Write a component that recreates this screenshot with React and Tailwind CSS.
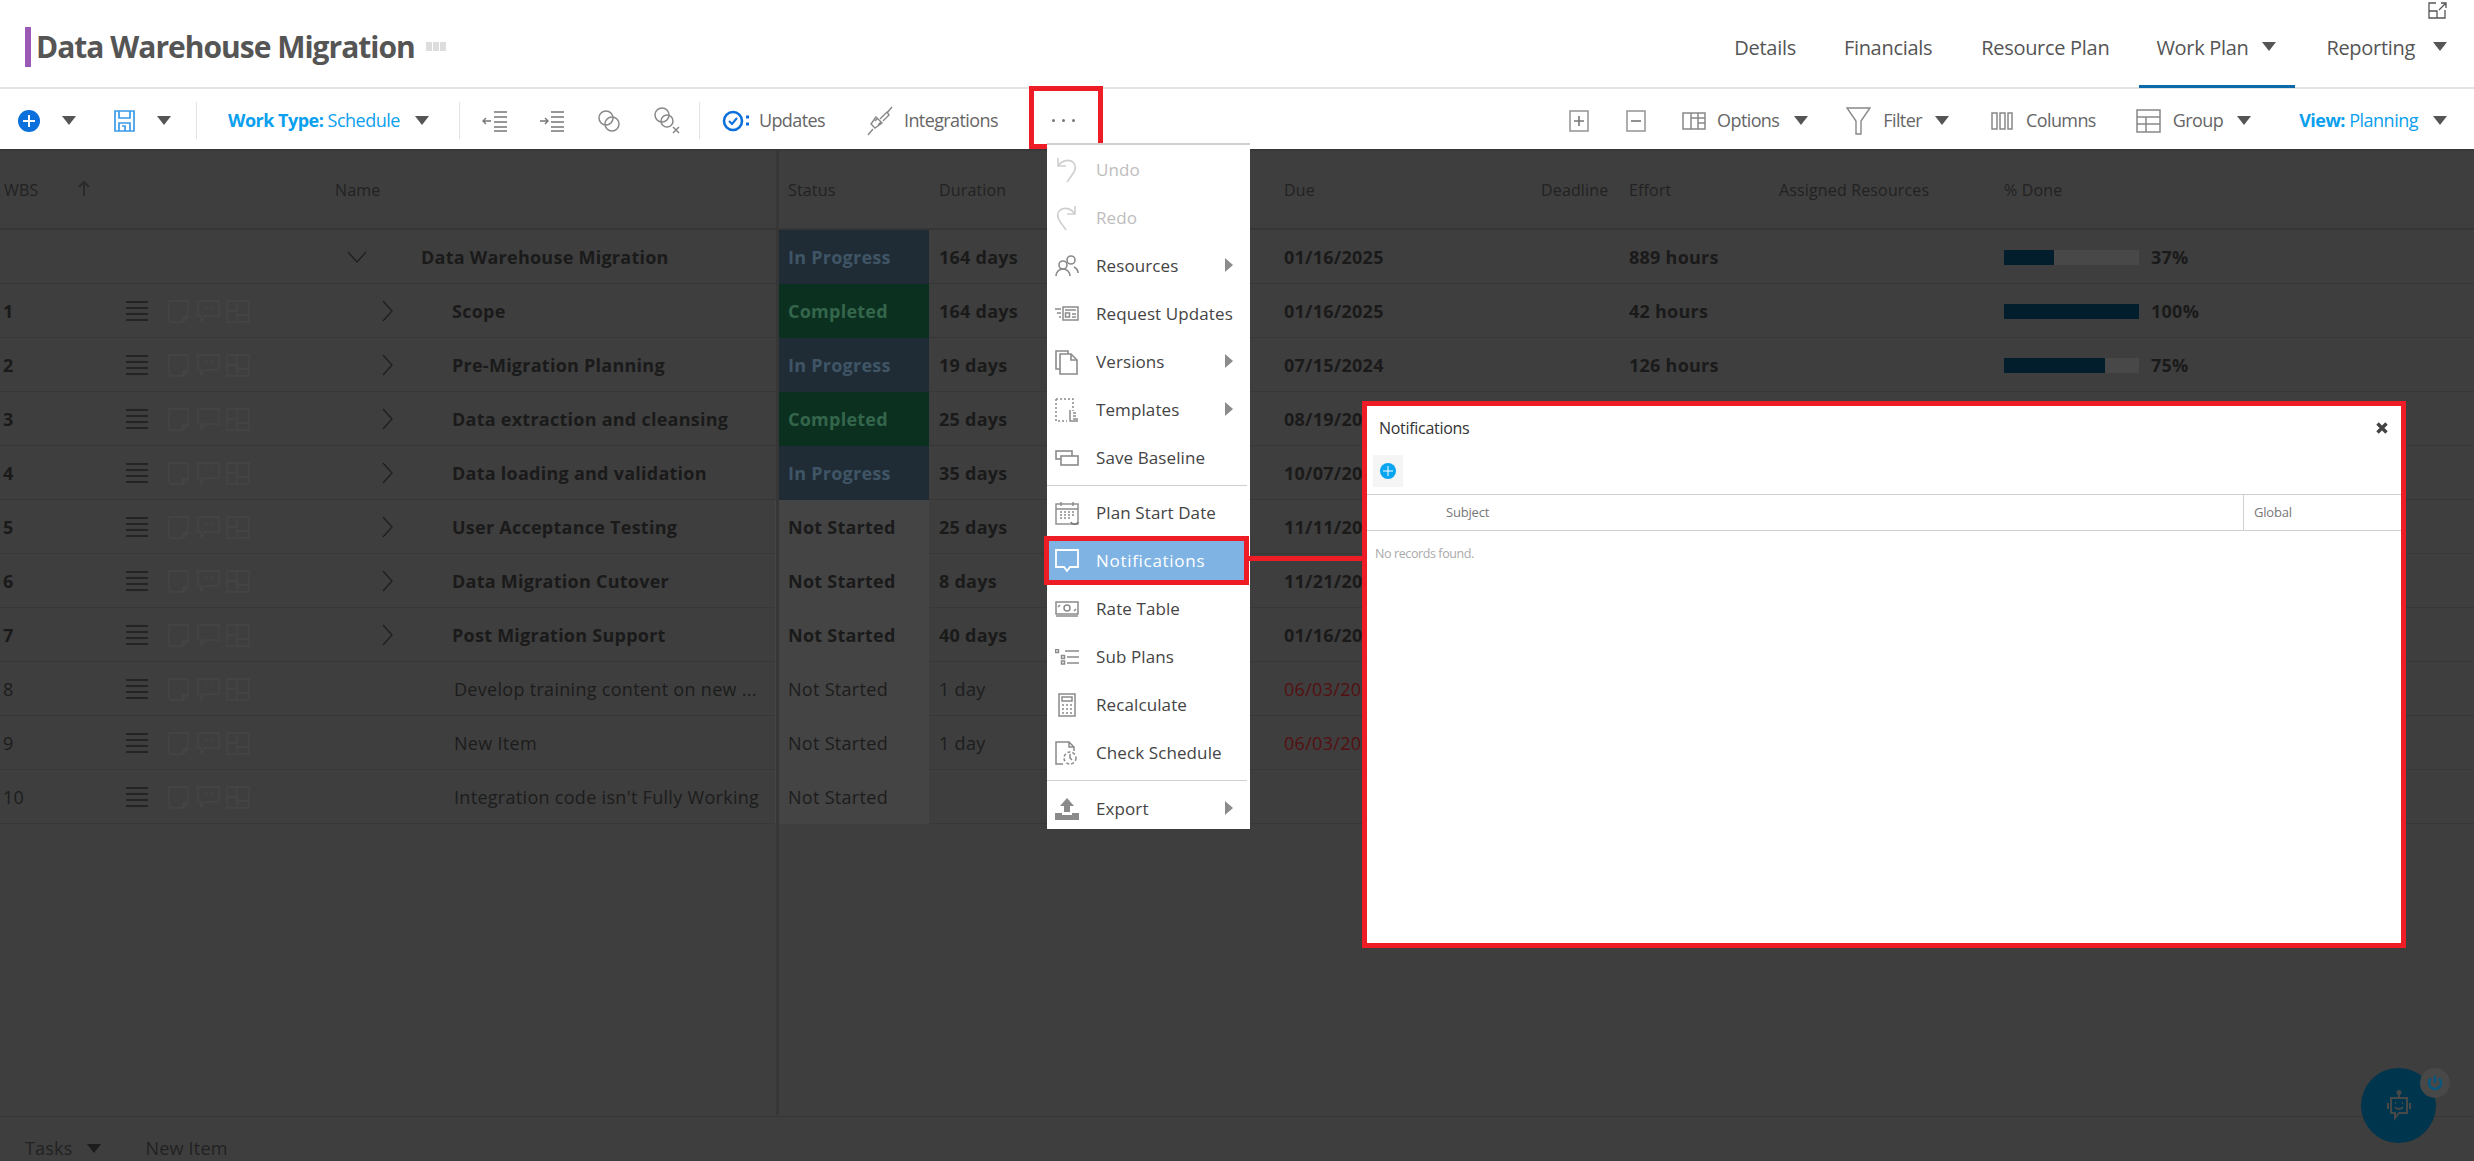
import React from "react";

const Caret = ({ c = "border-t-[#555]", cls = "" }) => (
  <span className={`inline-block w-0 h-0 border-l-[7px] border-r-[7px] border-t-[9px] border-l-transparent border-r-transparent ${c} ${cls}`} />
);

const S = ({ w, h, children, cls = "", stroke = "#8a8a8a", sw = 1.5, vb }) => (
  <svg width={w} height={h} viewBox={vb || `0 0 ${w} ${h}`} fill="none" stroke={stroke} strokeWidth={sw} className={`shrink-0 ${cls}`}>{children}</svg>
);

const icons = {
  undo: <S w={24} h={28} stroke="#cfcfcf" sw={1.6}><path d="M3 2v8h8M3 10c4-6 11-7 15-4 4 4 2 9-1 13l-5 7" /></S>,
  redo: <S w={24} h={28} stroke="#cfcfcf" sw={1.6}><path d="M20 2v8h-8M20 10c-4-6-11-7-15-4-4 4-2 9 1 13l5 7" /></S>,
  res: <S w={24} h={24} sw={1.6}><circle cx="16" cy="6" r="4" /><circle cx="8" cy="11" r="4" /><path d="M19 13c2 1 4 3 4 6M1 22c0-4 3-7 7-7s7 3 7 7" /></S>,
  req: <S w={24} h={16} sw={1.5}><rect x="8" y="1" width="15" height="13" /><path d="M10 4h11M0 3h6M2 7h4M4 11h2" /><rect x="10.5" y="7" width="4" height="4" /><path d="M17 8h4M17 11h4" /></S>,
  ver: <S w={24} h={26} sw={1.6}><path d="M5 20H1V2h12v3" /><path d="M5 5h11l6 6v14H5z" /><path d="M16 5v6h6" /></S>,
  tpl: <S w={24} h={25} sw={1.5}><path d="M1 1h17v12M1 1v22h11" strokeDasharray="2 2" /><path d="M15 12v11h8M18 15h3M18 18h3M18 21h5" /></S>,
  base: <S w={24} h={16} sw={1.6}><rect x="1" y="1" width="16" height="8" /><rect x="6" y="6" width="17" height="9" fill="#fff" /></S>,
  cal: <S w={24} h={25} sw={1.4}><rect x="1" y="3" width="22" height="20" /><path d="M1 8h22M6 1v4M18 1v4" /><path d="M5 11h2M9 11h2M13 11h2M17 11h2M5 14h2M9 14h2M13 14h2M17 14h2M5 17h2M9 17h2M13 17h2" /><path d="M16 21c1 3 6 3 7 0" stroke="#777" /></S>,
  note: <S w={24} h={24} stroke="#fff" sw={1.8}><path d="M1 1h22v17h-8l-3 4-3-4H1z" /></S>,
  rate: <S w={24} h={17} sw={1.5}><rect x="1" y="1" width="22" height="12" /><circle cx="12" cy="7" r="3" /><path d="M5 4l-2 2M19 10l2-2M1 15h22" /></S>,
  sub: <S w={24} h={16} sw={1.5}><rect x="0.5" y="0.5" width="3" height="3" /><rect x="6.5" y="6.5" width="3" height="3" /><rect x="6.5" y="12" width="3" height="3" /><path d="M10 2h14M12 8h12M12 14h12" /></S>,
  calc: <S w={24} h={24} sw={1.5}><rect x="4" y="1" width="16" height="22" /><rect x="7" y="4" width="10" height="4" /><path d="M7 12h2M11 12h2M15 12h2M7 16h2M11 16h2M15 16h2M7 20h2M11 20h2M15 20h2" /></S>,
  check: <S w={24} h={24} sw={1.5}><path d="M8 23H1V1h13l5 5v4M14 1v5h5" /><circle cx="15" cy="17" r="6" strokeDasharray="3 2" /><path d="M15 13v4l2 2" /></S>,
  exp: <svg width="24" height="22" viewBox="0 0 24 22" fill="#8a8a8a" className="shrink-0"><path d="M12 0l7 8h-4v6H9V8H5zM0 15h7v2h10v-2h7v7H0z" /></svg>,
};

const MenuItem = ({ icon, label, arrow, disabled, active }) => (
  <div className="relative flex items-center h-[48px] pl-[8px]">
    {active && <span className="absolute left-[2px] right-[6px] top-[4px] bottom-[5px] bg-[#7eb3e4]" />}
    <span className="relative w-[24px] h-[28px] flex items-center justify-center">{icons[icon]}</span>
    <span className={`relative ml-[17px] text-[17px] ${active ? "tracking-[0.7px] text-white" : disabled ? "tracking-[0.1px] text-[#bdbdbd]" : "tracking-[0.1px] text-[#444]"}`}>{label}</span>
    {arrow && <span className="absolute left-[178px] top-[16px] w-0 h-0 border-t-[7px] border-b-[7px] border-l-[8px] border-t-transparent border-b-transparent border-l-[#8c8c8c]" />}
    {active && <span className="absolute left-[-3px] top-[-1px] w-[205px] h-[49px] border-[5px] border-[#ee1c25]" />}
  </div>
);

const RowIcons = () => (
  <div className="flex items-center">
    <svg width="22" height="20" stroke="#1d1d1d" strokeWidth="1.6" className="shrink-0"><path d="M0 1h22M0 7h22M0 13h22M0 19h22" /></svg>
    <svg width="82" height="23" fill="none" stroke="#464646" strokeWidth="1.3" className="ml-[20px] shrink-0">
      <path d="M1 1h19v16l-5 5H3l-2-2zM15 22v-5h5" />
      <path d="M30 1h21v15H37l-4 5v-5h-3z" /><path d="M38 6v3M43 6v3" />
      <path d="M59 1h22v21H59zM59 11h10M69 1v21M69 15h12" />
    </svg>
  </div>
);

const Chevron = () => (
  <svg width="11" height="22" fill="none" stroke="#1d1d1d" strokeWidth="1.2"><path d="M1 1l9 10-9 10" /></svg>
);

const rows = [
  { w: "", n: "Data Warehouse Migration", st: "p", d: "164 days", due: "01/16/2025", e: "889 hours", pc: 37, root: 1, b: 1 },
  { w: "1", n: "Scope", st: "c", d: "164 days", due: "01/16/2025", e: "42 hours", pc: 100, b: 1 },
  { w: "2", n: "Pre-Migration Planning", st: "p", d: "19 days", due: "07/15/2024", e: "126 hours", pc: 75, b: 1 },
  { w: "3", n: "Data extraction and cleansing", st: "c", d: "25 days", due: "08/19/2024", b: 1 },
  { w: "4", n: "Data loading and validation", st: "p", d: "35 days", due: "10/07/2024", b: 1 },
  { w: "5", n: "User Acceptance Testing", st: "n", d: "25 days", due: "11/11/2024", b: 1 },
  { w: "6", n: "Data Migration Cutover", st: "n", d: "8 days", due: "11/21/2024", b: 1 },
  { w: "7", n: "Post Migration Support", st: "n", d: "40 days", due: "01/16/2025", b: 1 },
  { w: "8", n: "Develop training content on new ...", st: "n", d: "1 day", due: "06/03/2024", late: 1 },
  { w: "9", n: "New Item", st: "n", d: "1 day", due: "06/03/2024", late: 1 },
  { w: "10", n: "Integration code isn't Fully Working", st: "n" },
];

const stCls = {
  p: "ml-[3px] pl-[10px] bg-[#1f2c35] text-[#3f5566]",
  c: "ml-[3px] pl-[10px] bg-[#0b3020] text-[#34664b]",
  n: "pl-[13px] bg-[#444444] text-inherit",
};
const stTxt = { p: "In Progress", c: "Completed", n: "Not Started" };
const cols = "grid grid-cols-[126px_256px_70px_323px_154px_345px_257px_88px_150px_225px_1fr]";

const Row = ({ r }) => (
  <div className={`${cols} h-[54px] border-b border-[#373737] items-center text-[18px] ${r.b ? "font-bold tracking-[0.25px] text-[#1a1a1a]" : "tracking-[0.3px] text-[#1c1c1c]"}`}>
    <div className="pl-[3px]">{r.w}</div>
    <div>{!r.root && <RowIcons />}</div>
    <div>{r.root ? <svg width="20" height="12" fill="none" stroke="#1d1d1d" strokeWidth="1.2" className="-ml-[35px]"><path d="M1 1l9 10 9-10" /></svg> : r.b ? <Chevron /> : null}</div>
    <div className={`whitespace-nowrap ${r.root ? "-ml-[31px]" : r.b ? "" : "pl-[2px]"}`}>{r.n}</div>
    <div className={`h-[54px] flex items-center ${stCls[r.st]}`}><span>{stTxt[r.st]}</span></div>
    <div className="pl-[10px]">{r.d}</div>
    <div className={`pl-[10px] ${r.late ? "text-[#541010]" : ""}`}>{r.due}</div>
    <div />
    <div className="pl-[10px]">{r.e}</div>
    <div />
    <div className="pl-[10px] flex items-center">
      {r.pc != null && (
        <>
          <div className="w-[135px] h-[15px] bg-[#484848]">
            <div className="h-full bg-[#021d2b]" style={{ width: `${r.pc}%` }} />
          </div>
          <span className="ml-[12px]">{r.pc}%</span>
        </>
      )}
    </div>
  </div>
);

export default function App() {
  return (
    <div className="relative w-[2474px] h-[1161px] overflow-hidden bg-white font-['Open_Sans',sans-serif] flex flex-col">
      {/* header */}
      <header className="relative h-[89px] shrink-0 border-b-2 border-[#e3e3e3] flex items-center">
        <span className="ml-[25px] w-[6px] h-[40px] mt-[6px] bg-[#9b59b6]" />
        <h1 className="ml-[5px] mt-[6px] text-[30px] font-bold text-[#555] tracking-[-1px] whitespace-nowrap">Data Warehouse Migration</h1>
        <span className="ml-[11px] mt-[6px] flex gap-[1px]">
          <i className="w-[6px] h-[9px] bg-[#ddd]" /><i className="w-[6px] h-[9px] bg-[#ddd]" /><i className="w-[6px] h-[9px] bg-[#ddd]" />
        </span>
        <nav className="ml-auto mr-[27px] flex items-center h-full text-[20px] text-[#555] tracking-[-0.3px]">
          <span className="mr-[48px] mt-[8px]">Details</span>
          <span className="mr-[49px] mt-[8px]">Financials</span>
          <span className="mr-[30px] mt-[8px]">Resource Plan</span>
          <span className="relative h-full pl-[17px] flex items-center w-[156px] shrink-0">
            <span className="mt-[8px] whitespace-nowrap">Work Plan</span><Caret cls="ml-[13px] mt-[6px]" />
            <span className="absolute left-0 right-0 bottom-[-1px] h-[3px] bg-[#0a69a8]" />
          </span>
          <span className="ml-[31px] mt-[8px]">Reporting</span><Caret cls="ml-[18px] mt-[6px]" />
        </nav>
        <svg width="19" height="17" fill="none" stroke="#555" strokeWidth="1.3" className="absolute left-[2428px] top-[2px]">
          <path d="M8 1H1v15h16V8M1 9h8v7M11 8l7-7M13 1h5v5" />
        </svg>
      </header>

      {/* toolbar */}
      <div className="h-[60px] shrink-0 flex items-center text-[18px] text-[#666] tracking-[-0.6px] pt-[3px]">
        <svg width="22" height="22" className="ml-[18px] shrink-0"><circle cx="11" cy="11" r="11" fill="#0b6fdc" /><path d="M11 5v12M5 11h12" stroke="#fff" strokeWidth="2" /></svg>
        <Caret cls="ml-[22px]" />
        <svg width="21" height="22" fill="none" stroke="#3b9be8" strokeWidth="1.7" className="ml-[38px] shrink-0"><path d="M1 1h19v20H1zM5 1v7h11V1M5 21v-8h11v8M8 16h3v5" /></svg>
        <Caret cls="ml-[22px]" />
        <span className="ml-[25px] w-[1px] h-[37px] bg-[#e3e3e3]" />
        <span className="ml-[31px] text-[#0aa0ee] whitespace-nowrap tracking-[-0.5px]"><b>Work Type:</b> Schedule</span>
        <Caret cls="ml-[15px]" />
        <span className="ml-[30px] w-[1px] h-[37px] bg-[#e3e3e3]" />
        <svg width="26" height="22" fill="none" stroke="#777" strokeWidth="1.4" className="ml-[22px] shrink-0"><path d="M12 2h13M12 7h13M12 12h13M12 17h13M12 21h13M9 11H1M4 8l-3 3 3 3" /></svg>
        <svg width="26" height="22" fill="none" stroke="#777" strokeWidth="1.4" className="ml-[31px] shrink-0"><path d="M12 2h13M12 7h13M12 12h13M12 17h13M12 21h13M1 11h8M6 8l3 3-3 3" /></svg>
        <svg width="24" height="24" fill="none" stroke="#888" strokeWidth="1.5" className="ml-[32px] shrink-0"><circle cx="9" cy="9" r="7" /><circle cx="15" cy="15" r="7" /></svg>
        <svg width="26" height="27" fill="none" stroke="#888" strokeWidth="1.5" className="ml-[33px] shrink-0"><circle cx="8" cy="8" r="7" /><circle cx="13" cy="14" r="6" /><path d="M19 20l6 6M25 20l-6 6" /></svg>
        <span className="ml-[19px] w-[1px] h-[37px] bg-[#e3e3e3]" />
        <svg width="27" height="24" fill="none" stroke="#0b6fdc" strokeWidth="2.6" className="ml-[22px] shrink-0"><circle cx="11" cy="12" r="9" /><path d="M7 12l3 3 5-6" strokeWidth="2" /><path d="M24 8h3M24 15h3" strokeWidth="3" /></svg>
        <span className="ml-[10px]">Updates</span>
        <svg width="26" height="30" fill="none" stroke="#888" strokeWidth="1.4" className="ml-[42px] shrink-0"><path d="M1 29l5-6M25 1l-5 6M9 11l-5 7 4 4 7-5zM13 13l7-7 2 3-6 6M8 15l3-3M11 19l3-3" /></svg>
        <span className="ml-[11px]">Integrations</span>
        <span className="ml-[54px] flex gap-[7px] shrink-0"><i className="w-[3px] h-[3px] rounded-full bg-[#777]" /><i className="w-[3px] h-[3px] rounded-full bg-[#777]" /><i className="w-[3px] h-[3px] rounded-full bg-[#777]" /></span>

        <div className="ml-auto mr-[27px] flex items-center">
          <svg width="20" height="22" fill="none" stroke="#999" strokeWidth="1.6" className="shrink-0"><rect x="1" y="1" width="18" height="20" /><path d="M10 6v10M5 11h10" stroke="#777" /></svg>
          <svg width="20" height="22" fill="none" stroke="#999" strokeWidth="1.6" className="ml-[37px] shrink-0"><rect x="1" y="1" width="18" height="20" /><path d="M5 11h10" stroke="#777" /></svg>
          <svg width="24" height="18" fill="none" stroke="#888" strokeWidth="1.5" className="ml-[36px] shrink-0"><path d="M1 1h22v16H1zM9 1v16M16 1v16M9 6h14M16 11h7" /></svg>
          <span className="ml-[11px]">Options</span><Caret cls="ml-[15px]" />
          <svg width="25" height="28" fill="none" stroke="#888" strokeWidth="1.4" className="ml-[38px] shrink-0"><path d="M1 1h23l-9 13v13h-5V14z" /></svg>
          <span className="ml-[12px]">Filter</span><Caret cls="ml-[13px]" />
          <svg width="22" height="18" fill="none" stroke="#888" strokeWidth="1.5" className="ml-[42px] shrink-0"><path d="M1 1h5v16H1zM9 1h5v16H9zM17 1h4v16h-4z" /></svg>
          <span className="ml-[13px]">Columns</span>
          <svg width="25" height="24" fill="none" stroke="#888" strokeWidth="1.5" className="ml-[40px] shrink-0"><path d="M1 1h23v22H1zM1 8h23M1 15h23M10 8v15" /></svg>
          <span className="ml-[12px]">Group</span><Caret cls="ml-[14px]" />
          <span className="ml-[48px] text-[#0aa0ee] whitespace-nowrap tracking-[-0.5px]"><b>View:</b> Planning</span><Caret cls="ml-[15px]" />
        </div>
      </div>

      {/* dimmed worklist */}
      <main className="relative flex-1 bg-[#3e3e3e] border-t-[2px] border-[#383838] flex flex-col text-[#222]">
        <div className={`${cols} h-[79px] border-b-[2px] border-[#363636] items-center text-[16px] tracking-[0.15px] text-[#222]`}>
          <div className="pl-[4px] flex items-center">WBS
            <svg width="14" height="16" fill="none" stroke="#2a2a2a" strokeWidth="2" className="ml-[39px] mt-[-4px]"><path d="M7 16V2M2 7l5-5 5 5" /></svg>
          </div>
          <div className="pl-[209px]">Name</div>
          <div /><div />
          <div className="pl-[13px]">Status</div>
          <div className="pl-[10px]">Duration</div>
          <div className="pl-[10px]">Due</div>
          <div className="pl-[10px]">Deadline</div>
          <div className="pl-[10px]">Effort</div>
          <div className="pl-[10px]">Assigned Resources</div>
          <div className="pl-[10px]">% Done</div>
        </div>
        {rows.map((r, i) => <Row key={i} r={r} />)}
        <div className="flex-1" />
        <div className="h-[45px] shrink-0 border-t border-[#373737] flex items-center text-[18px] tracking-[0.2px] text-[#222] pt-[18px]">
          <span className="ml-[25px]">Tasks</span>
          <Caret c="border-t-[#1c1c1c]" cls="ml-[14px]" />
          <span className="ml-[45px]">New Item</span>
        </div>
        {/* left pane divider */}
        <span className="absolute left-[776px] top-0 bottom-[46px] w-[3px] bg-[#373737]" />
      </main>

      {/* red box on the more button */}
      <span className="absolute left-[1029px] top-[86px] w-[74px] h-[63px] border-[5px] border-[#ee1c25]" />

      {/* menu */}
      <div className="absolute left-[1047px] top-[143px] w-[203px] h-[686px] bg-white border-t-2 border-[#cfcfcf] pt-[1px]">
        <MenuItem icon="undo" label="Undo" disabled />
        <MenuItem icon="redo" label="Redo" disabled />
        <MenuItem icon="res" label="Resources" arrow />
        <MenuItem icon="req" label="Request Updates" />
        <MenuItem icon="ver" label="Versions" arrow />
        <MenuItem icon="tpl" label="Templates" arrow />
        <MenuItem icon="base" label="Save Baseline" />
        <div className="h-[1px] bg-[#cfcfcf] my-[3px] mr-[3px]" />
        <MenuItem icon="cal" label="Plan Start Date" />
        <MenuItem icon="note" label="Notifications" active />
        <MenuItem icon="rate" label="Rate Table" />
        <MenuItem icon="sub" label="Sub Plans" />
        <MenuItem icon="calc" label="Recalculate" />
        <MenuItem icon="check" label="Check Schedule" />
        <div className="h-[1px] bg-[#cfcfcf] mt-[3px] mb-[4px] mr-[3px]" />
        <MenuItem icon="exp" label="Export" arrow />
      </div>

      {/* connector */}
      <span className="absolute left-[1249px] top-[556px] w-[113px] h-[5px] bg-[#ee1c25]" />

      {/* modal */}
      <div className="absolute left-[1362px] top-[401px] w-[1044px] h-[547px] bg-white border-[5px] border-[#ee1c25] flex flex-col">
        <div className="h-[44px] shrink-0 flex items-center pl-[12px] pr-[13px] text-[16px] text-[#333] tracking-[-0.3px]">
          Notifications
          <svg width="12" height="12" stroke="#444" strokeWidth="3.4" className="ml-auto"><path d="M1.5 1.5l9 9M10.5 1.5l-9 9" /></svg>
        </div>
        <div className="h-[44px] shrink-0 pl-[6px] pt-[5px]">
          <div className="w-[30px] h-[32px] bg-[#f5f5f5] flex items-center justify-center">
            <svg width="16" height="16"><circle cx="8" cy="8" r="8" fill="#0aa5f0" /><path d="M8 3v10M3 8h10" stroke="#fff" strokeWidth="1" /></svg>
          </div>
        </div>
        <div className="h-[37px] shrink-0 border-t-[1.5px] border-b-[1.5px] border-[#d0d0d0] flex text-[13px] text-[#777] tracking-[-0.2px]">
          <div className="flex-1 flex items-center pl-[79px]">Subject</div>
          <div className="w-[158px] border-l-[1.5px] border-[#d0d0d0] flex items-center pl-[10px]">Global</div>
        </div>
        <div className="pl-[8px] pt-[14px] text-[12.5px] text-[#aaa] tracking-[-0.4px]">No records found.</div>
      </div>

      {/* bot */}
      <div className="absolute left-[2361px] top-[1068px] w-[75px] h-[75px] rounded-full bg-[#00354e] flex items-center justify-center">
        <svg width="24" height="32" fill="none" stroke="#484848" strokeWidth="2"><circle cx="12" cy="2.5" r="1.5" fill="#484848" /><path d="M12 4v4M4 8h16v15H12l-4 5v-5H4zM1 13v6M23 13v6" /><path d="M8 17c2 2.5 6 2.5 8 0" /><path d="M8 13h1M15 13h1" /></svg>
        <span className="absolute left-[59px] top-[0px] w-[30px] h-[30px] rounded-full bg-[#484848] flex items-center justify-center">
          <svg width="16" height="16" fill="none" stroke="#05577f" strokeWidth="2.4"><path d="M8 1v7M4 3.5a6 6 0 1 0 8 0" /></svg>
        </span>
      </div>
    </div>
  );
}
